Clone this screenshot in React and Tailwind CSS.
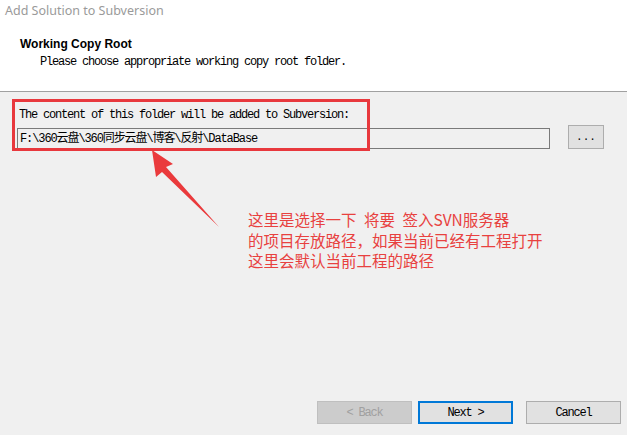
export default function App() {
  const mono = { fontFamily: '"Liberation Mono", "Noto Sans CJK SC", monospace' }

  return (
    <div className="relative w-[627px] h-[435px] flex flex-col bg-[#f0f0f0] overflow-hidden">
      {/* header */}
      <div className="h-[92px] bg-white border-b border-[#a0a0a0] flex flex-col">
        <div className="pl-[5px] pt-[3px] text-[12.5px] leading-[16px] text-[#9a9a9a] font-['Noto_Sans',sans-serif]">
          Add Solution to Subversion
        </div>
        <div className="pl-[20px] mt-[18px] text-[12px] leading-[15px] font-bold text-black font-['Liberation_Sans',sans-serif]">
          Working Copy Root
        </div>
        <div style={mono} className="pl-[40px] mt-[3px] text-[12px] leading-[14px] tracking-[-1.2px] text-black">
          Please choose appropriate working copy root folder.
        </div>
      </div>

      {/* body */}
      <div className="flex-1 flex flex-col">
        <div style={mono} className="pl-[19px] pt-[16px] text-[12px] leading-[14px] tracking-[-1.2px] text-black">
          The content of this folder will be added to Subversion:
        </div>
        <div className="flex items-end pl-[17px] mt-[3px] gap-[18px]">
          <div style={mono} className="w-[533px] h-[21px] border border-[#7a7a7a] bg-[#f0f0f0] px-[2px] flex items-center text-[12px] tracking-[-1.1px] text-black">
            F:\360云盘\360同步云盘\博客\反射\DataBase
          </div>
          <button style={mono} className="w-[36px] h-[24px] border border-[#adadad] bg-[#e1e1e1] text-[11px] text-black leading-none">
            ...
          </button>
        </div>

        <div className="ml-[248px] mt-[60px] text-[15.5px] leading-[20.5px] [word-spacing:4px] text-[#e8413f] font-['Noto_Sans_CJK_SC',sans-serif]">
          <div>这里是选择一下 将要 签入SVN服务器</div>
          <div>的项目存放路径，如果当前已经有工程打开</div>
          <div>这里会默认当前工程的路径</div>
        </div>

        <div className="mt-auto mb-[11px] mr-[6px] flex justify-end">
          <button style={mono} className="w-[95px] h-[23px] border border-[#bfbfbf] bg-[#cccccc] text-[12px] tracking-[-1.2px] text-[#a0a0a0]">
            &lt; Back
          </button>
          <button style={mono} className="ml-[6px] w-[95px] h-[23px] border-2 border-[#0078d7] bg-[#e1e1e1] text-[12px] tracking-[-1.2px] text-black">
            Next &gt;
          </button>
          <button style={mono} className="ml-[13px] w-[95px] h-[23px] border border-[#adadad] bg-[#e1e1e1] text-[12px] tracking-[-1.2px] text-black">
            Cancel
          </button>
        </div>
      </div>

      {/* annotation overlay */}
      <div className="absolute left-[12px] top-[99px] w-[358px] h-[52px] border-[3px] border-[#e8383d] pointer-events-none" />
      <svg className="absolute left-0 top-0 pointer-events-none" width="627" height="435" viewBox="0 0 627 435">
        <polygon
          points="152,150 173,164 166,167 219,227 162,172 156,177"
          fill="#ea3a3c"
        />
      </svg>
    </div>
  )
}
